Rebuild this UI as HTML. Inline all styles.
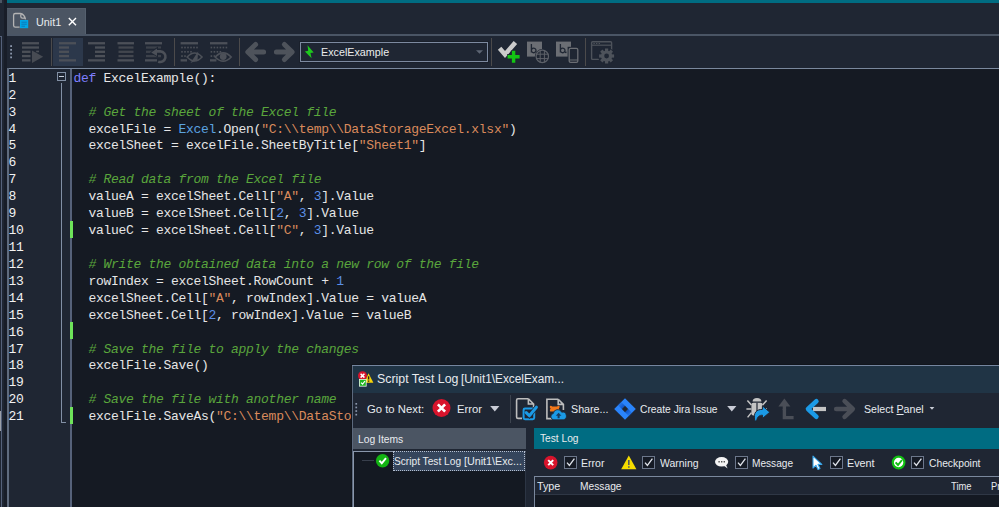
<!DOCTYPE html>
<html>
<head>
<meta charset="utf-8">
<title>Unit1</title>
<style>
*{box-sizing:border-box;margin:0;padding:0}
html,body{width:999px;height:507px;overflow:hidden;background:#1f2633}
body{position:relative;font-family:"Liberation Sans",sans-serif;font-size:12px;color:#e8e8e8}
.abs{position:absolute}
#topgrey{left:0;top:0;width:2px;height:3px;background:#4b5563}
#teal{left:7.3px;top:0;width:992px;height:3px;background:#006c82}
#tab{left:7.3px;top:7.8px;width:78.3px;height:27px;background:#4b5563;border-right:1px solid #55606e;border-top:1px solid #525d6b}
#tabline{left:7.3px;top:34px;width:992px;height:2px;background:#4a5565}
#tabtxt{left:37px;top:14px;font-size:12px;color:#eef0f3;letter-spacing:-0.2px;line-height:14px}
#leftline{left:1px;top:36px;width:1px;height:471px;background:#55617a}
#leftdark{left:3.5px;top:0;width:3.8px;height:507px;background:#181d28}
#leftbit{left:0;top:411px;width:1px;height:20px;background:#9a9fa8}
#lefttop{left:0;top:36px;width:2px;height:1px;background:#55617a}
/* toolbar */
.sep{position:absolute;top:38px;width:1px;height:28px;background:#4b4a4b}
#selbtn{left:53px;top:38px;width:30px;height:28px;background:#2c384b}
#combo{left:300px;top:41.6px;width:188.4px;height:20.8px;border:1.3px solid #7d8aa0;background:#1f2633;box-shadow:0 0 0 1px #1a202b}
#combotxt{left:321px;top:44px;font-size:12px;line-height:14px;color:#f0f0f0;letter-spacing:-0.15px}
/* editor */
#edtop{left:7px;top:68px;width:992px;height:1px;background:#7a889d}
#edleft{left:7px;top:68px;width:2px;height:439px;background:#5f6b7e}
#gutter{left:9px;top:69px;width:61px;height:438px;background:#1f2633}
#gutline{left:69.5px;top:69px;width:2.5px;height:438px;background:#56627a}
#codebg{left:72px;top:69px;width:927px;height:438px;background:#151a23}
.ln{position:absolute;left:8.6px;font-family:"Liberation Mono",monospace;font-size:13px;line-height:17px;letter-spacing:-0.3px;color:#f2f2f2;white-space:pre}
.cl{position:absolute;left:73.4px;font-family:"Liberation Mono",monospace;font-size:13px;line-height:17px;letter-spacing:-0.293px;color:#e6e6e6;white-space:pre}
.cl .k{color:#7f7fff}
.cl .c{color:#5aa63c;font-style:italic}
.cl .s{color:#da8a5c}
.cl .o{color:#5ba3e0}
.cl .n{color:#5b8fe6}
#foldbox{left:57px;top:72px;width:9px;height:9px;border:1px solid #8290a5}
#foldminus{left:59px;top:76px;width:5px;height:1px;background:#c8d0dc}
#foldline{left:61px;top:83px;width:5px;height:340px;border-left:1px solid #8290a5;border-bottom:1px solid #8290a5}
.chg{position:absolute;left:70.2px;width:3.2px;height:17.2px;background:#6ee35a}

.t{position:absolute;white-space:nowrap;line-height:16px;transform-origin:0 0;color:#e8ebef}
/* dialog */
#dshadow{left:350.5px;top:364px;width:649px;height:143px;background:#11151c}
#dborder{left:352px;top:365px;width:647px;height:142px;background:#5c697d;border-top:1px solid #7586a0}
#dtitle{left:353px;top:366px;width:646px;height:27px;background:#203445}
#dtool{left:353px;top:393px;width:646px;height:35px;background:#1f2633}
#dbody{left:353px;top:428px;width:646px;height:79px;background:#1f2633}
#lihead{left:353px;top:428px;width:173px;height:21px;background:#4b5563}
#tlhead{left:534px;top:428px;width:465px;height:21px;background:#006c82}
#tree{left:353px;top:451px;width:173px;height:56px;background:#141922;border-left:1px solid #8a97ab;border-top:1px solid #8a97ab;border-right:1px solid #2c3544}
#treesel{left:393px;top:451px;width:132px;height:20px;background:#35455c;border:1px dotted #b4bed0}
#tbl{left:534px;top:476px;width:465px;height:31px;background:#141922;border-left:1px solid #7a889d;border-top:1px solid #7a889d}
#tblhead{left:535px;top:477px;width:464px;height:17px;background:#1f2633;border-bottom:1px solid #2f3745;height:18px}
.dsep{position:absolute;left:510px;top:395px;width:1px;height:28px;background:#3d444f}
.cb{position:absolute;top:456px;width:13px;height:13px;border:1px solid #6c778b;background:#151a24}
</style>
</head>
<body>
<div class="abs" id="topgrey"></div>
<div class="abs" id="teal"></div>
<div class="abs" id="tab"></div>
<div class="abs" id="tabline"></div>
<div class="abs" id="leftdark"></div>
<div class="abs" id="leftline"></div>
<div class="abs" id="leftbit"></div>
<div class="abs" id="lefttop"></div>

<!-- toolbar -->
<div class="abs" id="selbtn"></div>
<div class="sep" style="left:51px"></div>
<div class="sep" style="left:174px"></div>
<div class="sep" style="left:239px"></div>
<div class="sep" style="left:491px"></div>
<div class="sep" style="left:585px"></div>
<div class="abs" id="combo"></div>
<svg class="abs" id="tbicons" style="left:0;top:0" width="999" height="68" viewBox="0 0 999 68">
<rect x="10.2" y="45.20" width="1.8" height="1.8" fill="#8a96ab"/>
<rect x="10.2" y="48.95" width="1.8" height="1.8" fill="#8a96ab"/>
<rect x="10.2" y="52.70" width="1.8" height="1.8" fill="#8a96ab"/>
<rect x="10.2" y="56.45" width="1.8" height="1.8" fill="#8a96ab"/>
<rect x="22" y="42.10" width="17.00" height="2.3" fill="#4c5058"/>
<rect x="22" y="46.38" width="17.00" height="2.3" fill="#4c5058"/>
<rect x="22" y="50.66" width="8.50" height="2.3" fill="#4c5058"/>
<rect x="22" y="54.94" width="8.50" height="2.3" fill="#4c5058"/>
<rect x="22" y="59.22" width="8.50" height="2.3" fill="#4c5058"/>
<rect x="36.2" y="50.66" width="2.8" height="1.6" fill="#4c5058"/>
<path d="M32 50.4 L43.2 56.7 L32 63 Z" fill="#474b53"/>
<rect x="59" y="42.10" width="17.00" height="2.3" fill="#4c5058"/>
<rect x="59" y="46.38" width="10.00" height="2.3" fill="#4c5058"/>
<rect x="59" y="50.66" width="10.00" height="2.3" fill="#4c5058"/>
<rect x="59" y="54.94" width="10.00" height="2.3" fill="#4c5058"/>
<rect x="59" y="59.22" width="17.00" height="2.3" fill="#4c5058"/>
<rect x="88" y="42.10" width="17.00" height="2.3" fill="#4c5058"/>
<rect x="95" y="46.38" width="10.00" height="2.3" fill="#4c5058"/>
<rect x="95" y="50.66" width="10.00" height="2.3" fill="#4c5058"/>
<rect x="95" y="54.94" width="10.00" height="2.3" fill="#4c5058"/>
<rect x="88" y="59.22" width="17.00" height="2.3" fill="#4c5058"/>
<rect x="117.5" y="42.10" width="16.50" height="2.3" fill="#4c5058"/>
<rect x="118.5" y="46.38" width="15.00" height="2.3" fill="#42464e"/>
<rect x="118.5" y="50.66" width="15.00" height="2.3" fill="#42464e"/>
<rect x="118.5" y="54.94" width="15.00" height="2.3" fill="#42464e"/>
<rect x="117.5" y="59.22" width="16.50" height="2.3" fill="#4c5058"/>
<rect x="145" y="42.10" width="17" height="2.3" fill="#4c5058"/>
<rect x="146" y="46.38" width="15" height="2.3" fill="#3c414a"/>
<rect x="146" y="50.66" width="15" height="2.3" fill="#3c414a"/>
<rect x="146" y="54.94" width="15" height="2.3" fill="#3c414a"/>
<rect x="145" y="59.22" width="12" height="2.3" fill="#4c5058"/>
<path d="M155.5 51.4 H160.4 A5.3 5.3 0 1 1 158.2 61.6" fill="none" stroke="#1f2633" stroke-width="5.4"/>
<path d="M150 52.6 L158 46.6 V57.6 Z" fill="#1f2633"/>
<path d="M155.5 51.4 H160.4 A5.3 5.3 0 1 1 158.2 61.6" fill="none" stroke="#4c5058" stroke-width="2.6"/>
<path d="M151.2 52.4 L157 48.4 V56 Z" fill="#4c5058"/>
<rect x="180.6" y="42.10" width="17.40" height="2.3" fill="#4c5058"/>
<rect x="181.20" y="46.68" width="1.6" height="1.7" fill="#4c5058"/>
<rect x="184.20" y="46.68" width="1.6" height="1.7" fill="#4c5058"/>
<rect x="187.20" y="46.68" width="1.6" height="1.7" fill="#4c5058"/>
<rect x="190.20" y="46.68" width="1.6" height="1.7" fill="#4c5058"/>
<rect x="193.20" y="46.68" width="1.6" height="1.7" fill="#4c5058"/>
<rect x="196.20" y="46.68" width="1.6" height="1.7" fill="#4c5058"/>
<rect x="181.20" y="50.96" width="1.6" height="1.7" fill="#4c5058"/>
<rect x="184.20" y="50.96" width="1.6" height="1.7" fill="#4c5058"/>
<rect x="187.20" y="50.96" width="1.6" height="1.7" fill="#4c5058"/>
<rect x="190.20" y="50.96" width="1.6" height="1.7" fill="#4c5058"/>
<rect x="181.20" y="55.24" width="1.6" height="1.7" fill="#4c5058"/>
<rect x="184.20" y="55.24" width="1.6" height="1.7" fill="#4c5058"/>
<rect x="180.6" y="59.22" width="6.40" height="2.3" fill="#4c5058"/>
<path d="M187.2 57 Q194.6 49 202 57 Q194.6 65 187.2 57 Z" fill="#1f2633" stroke="#4c5058" stroke-width="1.7"/>
<path d="M190.5 63 L198.2 51.2 L197.5 60 Z" fill="#4c5058"/>
<rect x="210" y="42.10" width="17.40" height="2.3" fill="#4c5058"/>
<rect x="210.60" y="46.68" width="1.6" height="1.7" fill="#4c5058"/>
<rect x="213.60" y="46.68" width="1.6" height="1.7" fill="#4c5058"/>
<rect x="216.60" y="46.68" width="1.6" height="1.7" fill="#4c5058"/>
<rect x="219.60" y="46.68" width="1.6" height="1.7" fill="#4c5058"/>
<rect x="222.60" y="46.68" width="1.6" height="1.7" fill="#4c5058"/>
<rect x="225.60" y="46.68" width="1.6" height="1.7" fill="#4c5058"/>
<rect x="210.60" y="50.96" width="1.6" height="1.7" fill="#4c5058"/>
<rect x="213.60" y="50.96" width="1.6" height="1.7" fill="#4c5058"/>
<rect x="216.60" y="50.96" width="1.6" height="1.7" fill="#4c5058"/>
<rect x="219.60" y="50.96" width="1.6" height="1.7" fill="#4c5058"/>
<rect x="210.60" y="55.24" width="1.6" height="1.7" fill="#4c5058"/>
<rect x="213.60" y="55.24" width="1.6" height="1.7" fill="#4c5058"/>
<rect x="210" y="59.22" width="6.40" height="2.3" fill="#4c5058"/>
<path d="M215.2 57 Q223.2 48.6 231.2 57 Q223.2 65.4 215.2 57 Z" fill="#1f2633" stroke="#4c5058" stroke-width="1.7"/>
<circle cx="223.2" cy="56.6" r="3.4" fill="#4c5058"/>
<path d="M263.6 52 H250 M255.6 44.5 L247.8 52 L255.6 59.5" fill="none" stroke="#4e535b" stroke-width="5" stroke-linecap="round" stroke-linejoin="round"/>
<path d="M276.4 52 H290 M284.4 44.5 L292.2 52 L284.4 59.5" fill="none" stroke="#4e535b" stroke-width="5" stroke-linecap="round" stroke-linejoin="round"/>
<path d="M307.5 45.3 L313.7 52.5 L310.5 53 L311.6 58.3 L304.9 51.4 L308.2 50.8 Z" fill="#1ec81e"/>
<path d="M476 50.2 H483 L479.5 53.8 Z" fill="#5d6573"/>
<path d="M499.6 48.2 L505 54.4 L515.4 42.6" fill="none" stroke="#cbcbcb" stroke-width="4.6" stroke-linejoin="miter"/>
<path d="M513.6 50.4 V63.2 M507.2 56.8 H520" fill="none" stroke="#1f2633" stroke-width="5.6"/>
<path d="M513.6 50.8 V62.8 M507.6 56.8 H519.6" fill="none" stroke="#13c413" stroke-width="3.4"/>
<rect x="527" y="41.6" width="15" height="15" fill="#6b6e74"/>
<path d="M531.4 44 V52.6 M531.4 50.4 a2.3 2.3 0 1 1 0 0.1" fill="none" stroke="#1f2633" stroke-width="1.3"/>
<circle cx="542.3" cy="56.4" r="7.4" fill="#1f2633"/>
<circle cx="542.3" cy="56.4" r="6.2" fill="none" stroke="#5d6169" stroke-width="1.2"/>
<path d="M536.2 54.2 H548.4 M536.2 58.6 H548.4 M540.2 50.4 V62.4 M544.4 50.4 V62.4" stroke="#5d6169" stroke-width="1" fill="none"/>
<rect x="556" y="41.6" width="15" height="15" fill="#6b6e74"/>
<path d="M560.4 44 V52.6 M560.4 50.4 a2.3 2.3 0 1 1 0 0.1" fill="none" stroke="#1f2633" stroke-width="1.3"/>
<rect x="567.6" y="46.8" width="11.4" height="17" fill="#1f2633"/>
<rect x="569.2" y="48.4" width="8.6" height="14" rx="1.4" fill="#1f2633" stroke="#6b6e74" stroke-width="1.3"/>
<path d="M569.2 60 H577.8" stroke="#6b6e74" stroke-width="1"/>
<rect x="565" y="51.6" width="1.5" height="1.5" fill="#1f2633"/>
<rect x="591.6" y="41.8" width="20" height="17.6" rx="1" fill="none" stroke="#4e535b" stroke-width="1.4"/>
<path d="M591.6 45.2 H611.6" stroke="#4e535b" stroke-width="1.2"/>
<path d="M593.4 43.5 h1.4 m1.2 0 h1.4 m1.2 0 h1.4" stroke="#4e535b" stroke-width="1"/>
<circle cx="606.6" cy="56" r="8.6" fill="#1f2633"/>
<rect x="-1.5" y="-1.6" width="3" height="3.2" transform="translate(612.60 56.00) rotate(0)" fill="#4e535b"/><rect x="-1.5" y="-1.6" width="3" height="3.2" transform="translate(610.84 60.24) rotate(45)" fill="#4e535b"/><rect x="-1.5" y="-1.6" width="3" height="3.2" transform="translate(606.60 62.00) rotate(90)" fill="#4e535b"/><rect x="-1.5" y="-1.6" width="3" height="3.2" transform="translate(602.36 60.24) rotate(135)" fill="#4e535b"/><rect x="-1.5" y="-1.6" width="3" height="3.2" transform="translate(600.60 56.00) rotate(180)" fill="#4e535b"/><rect x="-1.5" y="-1.6" width="3" height="3.2" transform="translate(602.36 51.76) rotate(225)" fill="#4e535b"/><rect x="-1.5" y="-1.6" width="3" height="3.2" transform="translate(606.60 50.00) rotate(270)" fill="#4e535b"/><rect x="-1.5" y="-1.6" width="3" height="3.2" transform="translate(610.84 51.76) rotate(315)" fill="#4e535b"/>
<circle cx="606.6" cy="56" r="4" fill="none" stroke="#4e535b" stroke-width="3.2"/>
</svg>

<!-- editor -->
<div class="abs" id="gutter"></div>
<div class="abs" id="codebg"></div>
<div class="abs" id="gutline"></div>
<div class="abs" id="edtop"></div>
<div class="abs" id="edleft"></div>
<div class="abs" id="foldline"></div>
<div class="abs" id="foldbox"></div>
<div class="abs" id="foldminus"></div>
<div class="chg" style="top:221px"></div>
<div class="chg" style="top:322.2px"></div>
<div class="chg" style="top:407px"></div>
<div id="lnums">
<div class="ln" style="top:70px">1</div>
<div class="ln" style="top:87px">2</div>
<div class="ln" style="top:104px">3</div>
<div class="ln" style="top:121px">4</div>
<div class="ln" style="top:137px">5</div>
<div class="ln" style="top:154px">6</div>
<div class="ln" style="top:171px">7</div>
<div class="ln" style="top:188px">8</div>
<div class="ln" style="top:205px">9</div>
<div class="ln" style="top:222px">10</div>
<div class="ln" style="top:239px">11</div>
<div class="ln" style="top:256px">12</div>
<div class="ln" style="top:273px">13</div>
<div class="ln" style="top:290px">14</div>
<div class="ln" style="top:307px">15</div>
<div class="ln" style="top:324px">16</div>
<div class="ln" style="top:341px">17</div>
<div class="ln" style="top:357px">18</div>
<div class="ln" style="top:374px">19</div>
<div class="ln" style="top:391px">20</div>
<div class="ln" style="top:408px">21</div>
</div>
<div id="code">
<div class="cl" style="top:70px"><span class="k">def</span> ExcelExample():</div>
<div class="cl" style="top:104px">  <span class="c"># Get the sheet of the Excel file</span></div>
<div class="cl" style="top:121px">  excelFile = <span class="o">Excel</span>.Open(<span class="s">"C:\\temp\\DataStorageExcel.xlsx"</span>)</div>
<div class="cl" style="top:137px">  excelSheet = excelFile.SheetByTitle[<span class="s">"Sheet1"</span>]</div>
<div class="cl" style="top:171px">  <span class="c"># Read data from the Excel file</span></div>
<div class="cl" style="top:188px">  valueA = excelSheet.Cell[<span class="s">"A"</span>, <span class="n">3</span>].Value</div>
<div class="cl" style="top:205px">  valueB = excelSheet.Cell[<span class="n">2</span>, <span class="n">3</span>].Value</div>
<div class="cl" style="top:222px">  valueC = excelSheet.Cell[<span class="s">"C"</span>, <span class="n">3</span>].Value</div>
<div class="cl" style="top:256px">  <span class="c"># Write the obtained data into a new row of the file</span></div>
<div class="cl" style="top:273px">  rowIndex = excelSheet.RowCount + <span class="n">1</span></div>
<div class="cl" style="top:290px">  excelSheet.Cell[<span class="s">"A"</span>, rowIndex].Value = valueA</div>
<div class="cl" style="top:307px">  excelSheet.Cell[<span class="n">2</span>, rowIndex].Value = valueB</div>
<div class="cl" style="top:341px">  <span class="c"># Save the file to apply the changes</span></div>
<div class="cl" style="top:357px">  excelFile.Save()</div>
<div class="cl" style="top:391px">  <span class="c"># Save the file with another name</span></div>
<div class="cl" style="top:408px">  excelFile.SaveAs(<span class="s">"C:\\temp\\DataStorageExcel2.xlsx"</span>)</div>
</div>


<svg class="abs" style="left:0;top:0" width="100" height="36" viewBox="0 0 100 36">
<path d="M20.6 13.5 H15.4 Q13.6 13.5 13.6 15.3 V25.4 Q13.6 27.2 15.4 27.2 H19.6 M20.6 13.5 Q24.6 14.6 25.5 19.4 M20.8 14.4 V16.6 Q20.8 18.2 22.4 18.2 H24.6" fill="none" stroke="#b4b4b4" stroke-width="1.3"/>
<rect x="20" y="20" width="8.2" height="8.2" fill="#00a5e6"/>
<path d="M21.4 22.2 H26.8 M21.4 24.2 H26.8 M21.4 26.2 H25" stroke="#0d79b8" stroke-width="1"/>
<path d="M68.8 18 L76 25.2 M76 18 L68.8 25.2" stroke="#fff" stroke-width="1.4"/>
</svg>
<!-- DIALOG -->

<div class="abs" id="dshadow"></div>
<div class="abs" id="dborder"></div>
<div class="abs" id="dtitle"></div>
<div class="abs" id="dtool"></div>
<div class="abs" id="dbody"></div>
<div class="abs" id="lihead"></div>
<div class="abs" id="tlhead"></div>
<div class="abs" id="tree"></div>
<div class="abs" id="treesel"></div>
<div class="abs" id="tbl"></div>
<div class="abs" id="tblhead"></div>
<div class="dsep"></div>
<div class="cb" style="left:564px"></div>
<div class="cb" style="left:642px"></div>
<div class="cb" style="left:735px"></div>
<div class="cb" style="left:830px"></div>
<div class="cb" style="left:911px"></div>

<svg class="abs" style="left:0;top:0" width="999" height="507" viewBox="0 0 999 507">
<rect x="355.4" y="403.00" width="1.7" height="1.7" fill="#8a96ab"/>
<rect x="355.4" y="406.60" width="1.7" height="1.7" fill="#8a96ab"/>
<rect x="355.4" y="410.20" width="1.7" height="1.7" fill="#8a96ab"/>
<rect x="355.4" y="413.80" width="1.7" height="1.7" fill="#8a96ab"/>
<circle cx="362.5" cy="375.7" r="4.5" fill="#d8142c"/>
<path d="M360.6 373.8 L364.4 377.6 M364.4 373.8 L360.6 377.6" stroke="#fff" stroke-width="1.5"/>
<path d="M368.5 373.2 L373.4 382.8 H364.4 Z" fill="#f5d20a"/>
<path d="M368.6 376.2 V379.6 M368.6 380.6 V381.8" stroke="#222" stroke-width="1.4"/>
<rect x="359" y="379" width="7.6" height="7.6" fill="#e8f2e8"/>
<rect x="359.8" y="379.8" width="6" height="6" fill="#1fb51f"/>
<path d="M361 382.6 L362.6 384.2 L365 381" stroke="#fff" stroke-width="1.2" fill="none"/>
<circle cx="441.5" cy="408" r="9" fill="#d8142c"/>
<path d="M437.9 404.4 L445.1 411.6 M445.1 404.4 L437.9 411.6" stroke="#fff" stroke-width="2.7"/>
<path d="M490.2 406 H499.4 L494.8 411.4 Z" fill="#c9ccd6"/>
<path d="M727.2 406 H736.4 L731.8 411.4 Z" fill="#c9ccd6"/>
<path d="M929.6 407 H934.4 L932 409.8 Z" fill="#c9ccd6"/>
<path d="M528.4 398.8 H518 Q516.6 398.8 516.6 400.2 V417 Q516.6 418.4 518 418.4 H522 M528.4 398.8 L533.6 404 V407.4 M528.4 398.8 V404 H533.6" fill="none" stroke="#bdbdbd" stroke-width="1.6"/>
<rect x="523.6" y="408.6" width="10.6" height="10.6" rx="1.4" fill="#1f2633" stroke="#1b9ae6" stroke-width="2"/>
<path d="M526 412.4 L529.4 415.8 L536.6 407" fill="none" stroke="#1f2633" stroke-width="4.4"/>
<path d="M526.2 412.6 L529.4 415.8 L536.4 407.2" fill="none" stroke="#1b9ae6" stroke-width="3" stroke-linecap="round" stroke-linejoin="round"/>
<path d="M558.2 399.2 H546.9 V418.6 H552 M558.2 399.2 L563.4 404.4 V410 M558.2 399.2 V404.4 H563.4" fill="none" stroke="#bdbdbd" stroke-width="1.6"/>
<path d="M550 406 q1.2 -0.8 2.2 0.4 h5 q1 -1.2 2.2 -0.4 q0.8 1.4 -0.6 2.4 q1.4 1.4 0.4 3 h-9 q-1 -1.6 0.4 -3 q-1.4 -1 -0.6 -2.4 Z" fill="#f2771a"/>
<path d="M553.8 419.8 a3.2 3.2 0 0 1 -0.5 -6.3 a4.4 4.4 0 0 1 8.4 -1.3 a3.8 3.8 0 0 1 1.6 7.6 Z" fill="#1b9ae6" stroke="#1f2633" stroke-width="0.8"/>
<path d="M558.6 412.8 L561.4 415.8 H559.6 V418.2 H557.6 V415.8 H555.8 Z" fill="#173a5e"/>
<defs><linearGradient id="jg1" gradientUnits="userSpaceOnUse" x1="623.4" y1="407.4" x2="618.4" y2="402.4"><stop offset="0" stop-color="#0847b8" stop-opacity="0.8"/><stop offset="1" stop-color="#0847b8" stop-opacity="0"/></linearGradient><linearGradient id="jg2" gradientUnits="userSpaceOnUse" x1="626.6" y1="410.6" x2="631.6" y2="415.6"><stop offset="0" stop-color="#0847b8" stop-opacity="0.8"/><stop offset="1" stop-color="#0847b8" stop-opacity="0"/></linearGradient></defs>
<path d="M625 398.2 L635.8 409 L625 419.8 L614.2 409 Z" fill="#2a84fb"/>
<path d="M625 405.8 L621.8 409 L616.6 403.8 L619.8 400.6 Z" fill="url(#jg1)"/>
<path d="M625 412.2 L628.2 409 L633.4 414.2 L630.2 417.4 Z" fill="url(#jg2)"/>
<path d="M625 405.8 L628.2 409 L625 412.2 L621.8 409 Z" fill="#1f2633"/>
<path d="M752.6 401.6 a4.4 3.6 0 0 1 8.8 0 Z" fill="#c4c4c4"/>
<rect x="751.4" y="402.8" width="11.2" height="12.6" rx="2" fill="#c4c4c4"/>
<path d="M757 402.8 V415" stroke="#1f2633" stroke-width="1.2"/>
<path d="M751.4 405 L747.4 400.6 M762.6 405 L766.6 400.6 M751.4 409 H746.4 M762.6 409 H767 M751.4 412.6 L747.6 417.4" stroke="#c4c4c4" stroke-width="1.5" fill="none"/>
<path d="M754.8 421 C753 412 756.8 409.4 762.4 409.4 V405.8 L769.8 412.2 L762.4 418.6 V415.2 C759.4 415.2 757.4 416.4 756.6 421 Z" fill="#1b9ae6" stroke="#1f2633" stroke-width="1"/>
<path d="M784.4 409 V417.6 H793.6" fill="none" stroke="#4a4e57" stroke-width="3.4"/>
<path d="M784.4 398.6 L790.4 406.4 H778.4 Z" fill="#4a4e57"/>
<rect x="782.7" y="405" width="3.4" height="5" fill="#4a4e57"/>
<path d="M813 409 H826" stroke="#c4c4c4" stroke-width="4.2"/>
<path d="M816.4 401.2 L808 409 L816.4 416.8" fill="none" stroke="#1b9ae6" stroke-width="4.6" stroke-linecap="round" stroke-linejoin="round"/>
<path d="M836.2 409 H850 M844.6 401.2 L852.8 409 L844.6 416.8" fill="none" stroke="#4a4e57" stroke-width="4.6" stroke-linecap="round" stroke-linejoin="round"/>
<path d="M362.5 460.5 H373.5" stroke="#5d6777" stroke-width="1" stroke-dasharray="1 1"/>
<circle cx="382.6" cy="460.7" r="6.7" fill="#13b413"/>
<path d="M379.4 460.6 L381.8 463.2 L386 458.2" fill="none" stroke="#fff" stroke-width="1.9"/>
<circle cx="550.7" cy="462.6" r="6.8" fill="#d8142c"/>
<path d="M548.2 460.1 L553.2 465.1 M553.2 460.1 L548.2 465.1" stroke="#fff" stroke-width="2"/>
<path d="M567 462.6 L569.4 465.4 L574.4 458.6" fill="none" stroke="#dfe3ea" stroke-width="1.3"/>
<path d="M645 462.6 L647.4 465.4 L652.4 458.6" fill="none" stroke="#dfe3ea" stroke-width="1.3"/>
<path d="M738 462.6 L740.4 465.4 L745.4 458.6" fill="none" stroke="#dfe3ea" stroke-width="1.3"/>
<path d="M833 462.6 L835.4 465.4 L840.4 458.6" fill="none" stroke="#dfe3ea" stroke-width="1.3"/>
<path d="M914 462.6 L916.4 465.4 L921.4 458.6" fill="none" stroke="#dfe3ea" stroke-width="1.3"/>
<path d="M628.8 455.6 L636.4 469.2 H621.2 Z" fill="#f5dc00"/>
<path d="M628.8 460 V465 M628.8 466.2 V467.8" stroke="#555a60" stroke-width="1.6"/>
<ellipse cx="721.6" cy="461.8" rx="6.6" ry="4.8" fill="#f4f4f4"/>
<path d="M723.6 465.4 L727.6 468.6 L725.8 464.6 Z" fill="#f4f4f4"/>
<path d="M718.4 461.8 h1.4 m1.2 0 h1.4 m1.2 0 h1.4" stroke="#555" stroke-width="1.4"/>
<path d="M813 456.2 V468 L815.9 465.3 L818 469.4 L820 468.4 L818 464.4 H821.8 Z" fill="#fff" stroke="#3aa8ec" stroke-width="1.1" stroke-linejoin="round"/>
<circle cx="898.6" cy="462.5" r="5.8" fill="#fff" stroke="#12c012" stroke-width="2.2"/>
<path d="M895.6 462.4 L898 465 L902 460" fill="none" stroke="#12c012" stroke-width="2"/>
</svg>
<div class="t" id="l_tab" style="left:36px;top:14px;font-size:11px;color:#e8ebef;transform:scaleX(0.9802)">Unit1</div>
<div class="t" id="l_combo" style="left:321px;top:44px;font-size:11px;color:#ececec;transform:scaleX(0.9780)">ExcelExample</div>
<div class="t" id="l_title" style="left:377px;top:371px;font-size:12.5px;color:#e8ebef;transform:scaleX(0.9877)">Script Test Log</div>
<div class="t" id="l_title2" style="left:461px;top:371px;font-size:12.5px;color:#e8ebef;transform:scaleX(0.9440)">[Unit1\ExcelExam...</div>
<div class="t" id="l_goto" style="left:367px;top:401px;font-size:11px;color:#e8ebef;transform:scaleX(1.0279)">Go to Next:</div>
<div class="t" id="l_err1" style="left:457px;top:401px;font-size:11px;color:#e8ebef;transform:scaleX(1.0225)">Error</div>
<div class="t" id="l_share" style="left:571px;top:401px;font-size:11px;color:#e8ebef;transform:scaleX(0.9734)">Share...</div>
<div class="t" id="l_jira" style="left:640px;top:401px;font-size:11px;color:#e8ebef;transform:scaleX(0.9330)">Create Jira Issue</div>
<div class="t" id="l_selp" style="left:864px;top:401px;font-size:11px;color:#e8ebef;transform:scaleX(0.9668)">Select <u>P</u>anel</div>
<div class="t" id="l_logitems" style="left:358px;top:431px;font-size:11px;color:#e8ebef;transform:scaleX(0.9362)">Log Items</div>
<div class="t" id="l_tree" style="left:394px;top:453px;font-size:11px;color:#e8ebef;transform:scaleX(0.9240)">Script Test Log</div>
<div class="t" id="l_tree2" style="left:464px;top:453px;font-size:11px;color:#e8ebef;transform:scaleX(0.9775)">[Unit1\Exc...</div>
<div class="t" id="l_testlog" style="left:540px;top:430px;font-size:11px;color:#e8ebef;transform:scaleX(0.9268)">Test Log</div>
<div class="t" id="l_ferr" style="left:581px;top:455px;font-size:11px;color:#e8ebef;transform:scaleX(0.9577)">Error</div>
<div class="t" id="l_fwarn" style="left:660px;top:455px;font-size:11px;color:#e8ebef;transform:scaleX(0.9504)">Warning</div>
<div class="t" id="l_fmsg" style="left:752px;top:455px;font-size:11px;color:#e8ebef;transform:scaleX(0.9188)">Message</div>
<div class="t" id="l_fevt" style="left:847px;top:455px;font-size:11px;color:#e8ebef;transform:scaleX(0.9816)">Event</div>
<div class="t" id="l_fchk" style="left:929px;top:455px;font-size:11px;color:#e8ebef;transform:scaleX(0.9353)">Checkpoint</div>
<div class="t" id="l_type" style="left:537px;top:478px;font-size:11px;color:#e8ebef;transform:scaleX(0.9792)">Type</div>
<div class="t" id="l_msg" style="left:580px;top:478px;font-size:11px;color:#e8ebef;transform:scaleX(0.9306)">Message</div>
<div class="t" id="l_time" style="left:951px;top:478px;font-size:11px;color:#e8ebef;transform:scaleX(0.8544)">Time</div>
<div class="t" id="l_pr" style="left:991px;top:478px;font-size:11px;color:#e8ebef;transform:scaleX(0.8500)">Priority</div>
</body>
</html>
